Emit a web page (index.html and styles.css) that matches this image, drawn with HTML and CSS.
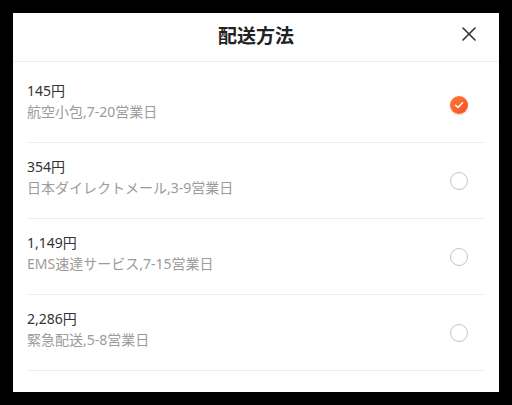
FILE: index.html
```html
<!DOCTYPE html>
<html lang="ja">
<head>
    <meta charset="UTF-8">
    <meta name="viewport" content="width=device-width, initial-scale=1.0">
    <title>配送方法</title>
    <link rel="stylesheet" href="styles.css">
</head>
<body>
    <div class="sheet">
        <div class="sheet-header">
            <span></span>
            <h1 class="sheet-title">配送方法</h1>
            <button class="close" aria-label="閉じる">
                <svg width="14" height="14" viewBox="0 0 14 14">
                    <path d="M1 1L13 13M13 1L1 13" stroke="#333" stroke-width="1.6" stroke-linecap="round"/>
                </svg>
            </button>
        </div>
        <ul class="options">
            <li class="option">
                <div class="option-text">
                    <div class="price">145円</div>
                    <div class="desc">航空小包,7-20営業日</div>
                </div>
                <span class="radio checked">
                    <svg width="10" height="8" viewBox="0 0 10 8">
                        <path d="M1.5 4.2L4 6.4L8.5 1.8" fill="none" stroke="#fff" stroke-width="1.5" stroke-linecap="round" stroke-linejoin="round"/>
                    </svg>
                </span>
            </li>
            <li class="option">
                <div class="option-text">
                    <div class="price">354円</div>
                    <div class="desc">日本ダイレクトメール,3-9営業日</div>
                </div>
                <span class="radio"></span>
            </li>
            <li class="option">
                <div class="option-text">
                    <div class="price">1,149円</div>
                    <div class="desc">EMS速達サービス,7-15営業日</div>
                </div>
                <span class="radio"></span>
            </li>
            <li class="option">
                <div class="option-text">
                    <div class="price">2,286円</div>
                    <div class="desc">緊急配送,5-8営業日</div>
                </div>
                <span class="radio"></span>
            </li>
        </ul>
    </div>
</body>
</html>
```

FILE: styles.css
```css
body {
    margin: 0;
    padding: 13px;
    background: #000;
    font-family: "Noto Sans", "Noto Sans CJK JP", sans-serif;
}
.sheet {
    background: #fff;
    height: 379px;
}
.sheet-header {
    display: grid;
    grid-template-columns: 1fr auto 1fr;
    align-items: center;
    height: 49px;
    box-sizing: border-box;
    padding-bottom: 6px;
    border-bottom: 1px solid #ededed;
}
.sheet-title {
    margin: 0;
    font-size: 19px;
    font-weight: 700;
    color: #222;
    font-family: "Noto Sans CJK JP", sans-serif;
}
.close {
    justify-self: end;
    margin-right: 23px;
    padding: 0;
    border: none;
    background: none;
    display: flex;
}
.options {
    list-style: none;
    margin: 0;
    padding: 5px 0 0;
}
.option {
    display: flex;
    align-items: center;
    justify-content: space-between;
    margin: 0 14px;
    height: 75px;
    border-bottom: 1px solid #ededed;
}
.option-text {
    line-height: 21px;
    font-size: 14px;
    margin-bottom: 8px;
}
.price {
    color: #333;
}
.desc {
    color: #9b9b9b;
}
.radio {
    width: 18px;
    height: 18px;
    box-sizing: border-box;
    border: 1px solid #c4c4c4;
    border-radius: 50%;
    margin-right: 17px;
    margin-top: 1px;
    display: flex;
    align-items: center;
    justify-content: center;
}
.radio.checked {
    border: none;
    background: linear-gradient(135deg, #ff7a3a, #f5511d);
    box-shadow: 0 1px 2px rgba(245, 81, 29, 0.3);
}
```
